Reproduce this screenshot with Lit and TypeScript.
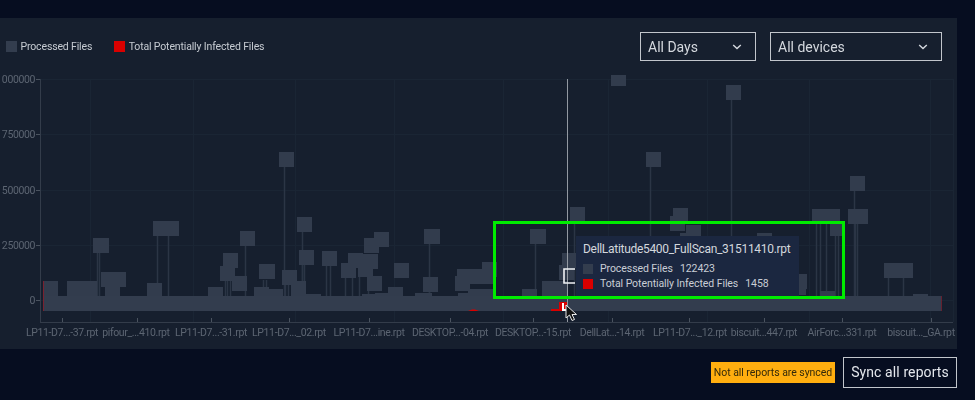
import { LitElement, html, css, svg } from "lit";
import { customElement } from "lit/decorators.js";

const M: [number, number, number?][] = [
  [43,281],[67,281],[80,281],[82,281],[93,238,16],[101,272],[111,272],[105,285],[153,221],[164,221],[147,283],
  [208,287],[223,253],[220,266],[240,231],[232,276],[259,264,16],[254,287],[268,289],[282,270],[297,217],[299,250],[291,281],
  [322,251],[279,152],[348,253],[341,263],[364,238],[374,232],[363,254],[358,262],[367,276],[388,287],[394,263],
  [424,229,16],[423,277],[417,293],[455,276],[457,269],[468,269],[478,269],[482,262],[468,289],[480,289],[522,289],[530,229,16],
  [542,281],[552,281],[562,253],[559,265],[570,207],[611,71],[646,152],[726,85],[850,176],
  [670,216],[673,208],[686,225],[680,233],[757,233],[812,209],[825,209],[830,221],[848,209],[853,209],
  [884,263],[898,263],[913,294],[792,274],[791,280],
  [306,294],[362,294],[375,293],[415,293],[458,293],[475,293],[820,291],
];
const STEMS: [number, number][] = [
  [97,253],[99,253],[157,236],[168,236],[227,268],[225,281],[230,268],[245,246],[263,280],[266,280],[284,167],[285,285],[288,285],[302,232],[304,265],[302,265],
  [326,266],[330,266],[345,278],[352,278],[359,277],[368,277],[429,244],[429,292],[535,244],[574,222],[650,167],[731,100],[854,191],
  [816,224],[820,224],[826,224],[835,236],[838,236],[855,224],[857,224],[888,278],[903,278],
];
const XT: [number, number, string][] = [
  [62,62,"LP11-D7...-37.rpt"],[137,136,"pifour_...410.rpt"],[211,211,"LP11-D7...-31.rpt"],[289,289,"LP11-D7..._02.rpt"],
  [369,369,"LP11-D7...ine.rpt"],[450,450,"DESKTOP...-04.rpt"],[533,533,"DESKTOP...-15.rpt"],[612,612,"DellLat...-14.rpt"],
  [689,690,"LP11-D7..._12.rpt"],[764,764,"biscuit...447.rpt"],[842,842,"AirForc...331.rpt"],[931,921,"biscuit..._GA.rpt"],
];
const YT: [number, string][] = [[79,"1000000"],[134,"750000"],[190,"500000"],[245,"250000"],[300,"0"]];
const VG = [90,193,295,394,503,608,707,809,930,953];

@customElement("app-root")
export class AppRoot extends LitElement {
  static styles = css`
    :host { display: block; width: 975px; height: 400px; background: #060d20; overflow: hidden; font-family: Roboto, sans-serif; }
    .wrap { filter: blur(0.3px); }
    .panel { position: relative; margin-top: 18px; width: 957px; height: 331px; background: #161f2e; }
    .wrap { padding-top: 18px; }
    .panel { margin-top: 0; }
    .head { position: relative; display: flex; align-items: center; height: 57px; padding-left: 6px; padding-right: 15px; box-sizing: border-box; }
    .legend { display: flex; flex: 1; align-items: center; gap: 22px; color: #c6cbd2; font-size: 10.5px; letter-spacing: -0.15px; white-space: nowrap; }
    .li { display: flex; align-items: center; gap: 3.5px; }
    .sw { width: 11px; height: 11px; background: #333d4e; }
    .sw.red { background: #d90000; }
    .selects { display: flex; gap: 14px; }
    .sel { display: flex; align-items: center; justify-content: space-between; box-sizing: border-box; height: 29px; border: 1px solid #c2c6cc; padding: 0 13px 0 7px; color: #d4d8de; font-size: 14px; }
    .w1 { width: 116px; }
    .w2 { width: 172px; }
    svg.chart { display: block; position: absolute; left: 0; top: 0; }
    .ax { font-size: 10.5px; letter-spacing: -0.38px; fill: #5c6572; font-family: Roboto, sans-serif; }
    .tip { position: absolute; left: 576px; top: 218px; width: 223px; height: 60px; box-sizing: border-box; background: #1b2740; padding: 5px 7px; color: #c9ced6; font-size: 10.5px; letter-spacing: -0.07px; }
    .tt { font-size: 12px; letter-spacing: -0.3px; color: #d3d7dd; line-height: 16px; margin-bottom: 4px; white-space: nowrap; }
    .tr { display: flex; align-items: center; height: 15px; white-space: nowrap; }
    .tr .sw { width: 10px; height: 10px; margin-right: 7px; flex: none; }
    .tr .v { margin-left: 7px; }
    .green { position: absolute; left: 493px; top: 203px; width: 352px; height: 78px; box-sizing: border-box; border: 3px solid #00ec00; pointer-events: none; }
    .cursor { position: absolute; left: 565px; top: 286px; }
    .foot { display: flex; justify-content: flex-end; align-items: center; gap: 8px; width: 957px; height: 31px; margin-top: 8px; }
    .warn { background: #ffae0f; color: #33290a; font-size: 10.5px; letter-spacing: -0.05px; width: 124px; height: 21px; line-height: 21px; text-align: center; white-space: nowrap; }
    .btn { box-sizing: border-box; width: 114px; height: 31px; line-height: 28px; border: 1.5px solid #c2c6cc; color: #e4e7ec; font-size: 14px; text-align: center; letter-spacing: 0.1px; white-space: nowrap; }
    .chev { display: block; }
  `;

  chart() {
    return svg`<svg class="chart" width="957" height="331" viewBox="0 18 957 331">
      <defs><clipPath id="c"><rect x="0" y="75" width="957" height="265"/></clipPath></defs>
      ${YT.map(([y]) => svg`<line x1="41" x2="953" y1=${y + .5} y2=${y + .5} stroke="#1a2534"/>`)}
      ${VG.map(x => svg`<line x1=${x + .5} x2=${x + .5} y1="79" y2="322" stroke="#1a2534"/>`)}
      <line x1="40.5" x2="40.5" y1="79" y2="323" stroke="#333c4a"/>
      <line x1="40" x2="953" y1="322.5" y2="322.5" stroke="#333c4a"/>
      ${YT.map(([y, t]) => svg`<line x1="36" x2="40" y1=${y + .5} y2=${y + .5} stroke="#4a535f"/><text class="ax" x="35" y=${y + 4} text-anchor="end">${t}</text>`)}
      ${XT.map(([x, lx, t]) => svg`<line x1=${x + .5} x2=${x + .5} y1="318" y2="322" stroke="#4a535f"/><text class="ax" x=${lx} y="336" text-anchor="middle">${t}</text>`)}
      <g clip-path="url(#c)">
        ${STEMS.map(([x, y]) => svg`<line x1=${x + .5} x2=${x + .5} y1=${y} y2="296" stroke="#2b3545" stroke-width="1.5"/>`)}
        ${M.map(([x, y, w]) => svg`<rect x=${x} y=${y} width=${w ?? 15} height="15" fill="#323c4d"/>`)}
        <rect x="44" y="296" width="897" height="15" fill="#333d4e"/>
        <rect x="43" y="281" width="1" height="30" fill="#7a2230"/>
        <rect x="941" y="296" width="0.8" height="15" fill="#7a2230"/>
        <path d="M468 311 l4 -1.5 h3 l4 1.5z M551 311 v-2 h8 v-7 h8 v9z" fill="#d90000"/>
        <path d="M563 303 v7 h4" fill="none" stroke="#fff" stroke-width="2"/>
      </g>
      <line x1="567.5" x2="567.5" y1="79" y2="322" stroke="#9298a1"/>
      <path d="M575 269 h-11 v14 h11" fill="none" stroke="#f0f2f5" stroke-width="1.6"/>
    </svg>`;
  }

  chevron() {
    return html`<svg class="chev" width="10" height="6" viewBox="0 0 10 6"><path d="M1.2 1 L5 4.6 L8.8 1" fill="none" stroke="#d4d8de" stroke-width="1.4"/></svg>`;
  }

  render() {
    return html`
      <div class="wrap">
        <div class="panel">
          ${this.chart()}
          <div class="head">
            <div class="legend">
              <div class="li"><span class="sw"></span>Processed Files</div>
              <div class="li"><span class="sw red"></span>Total Potentially Infected Files</div>
            </div>
            <div class="selects">
              <div class="sel w1">All Days ${this.chevron()}</div>
              <div class="sel w2">All devices ${this.chevron()}</div>
            </div>
          </div>
          <div class="tip">
            <div class="tt">DellLatitude5400_FullScan_31511410.rpt</div>
            <div class="tr"><span class="sw"></span>Processed Files<span class="v">122423</span></div>
            <div class="tr"><span class="sw red"></span>Total Potentially Infected Files<span class="v">1458</span></div>
          </div>
          <div class="green"></div>
          <svg class="cursor" width="14" height="18" viewBox="0 0 14 18"><path d="M1 1 V14 L4.5 11 L7 16.5 L9.5 15.5 L7 10.5 H11.5 Z" fill="#111" stroke="#e8e8e8" stroke-width="1"/></svg>
        </div>
        <div class="foot">
          <div class="warn">Not all reports are synced</div>
          <div class="btn">Sync all reports</div>
        </div>
      </div>
    `;
  }
}
